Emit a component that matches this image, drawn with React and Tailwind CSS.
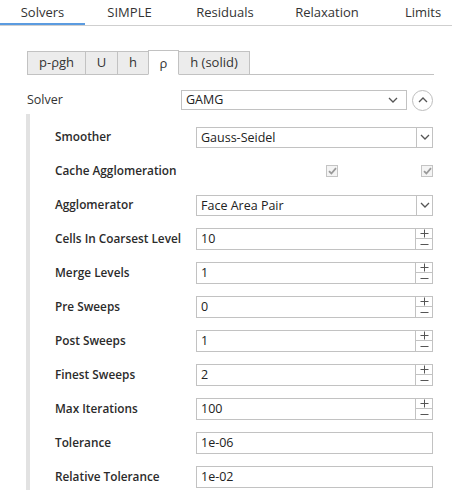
import React from "react";

const font = { fontFamily: '"Open Sans", "Noto Sans", sans-serif' };

function Chevron({ up = false, className = "" }) {
  return (
    <svg width="10" height="6" viewBox="0 0 10 6" className={className}>
      <path
        d={up ? "M1 5 L5 1 L9 5" : "M1 1 L5 5 L9 1"}
        fill="none"
        stroke="#555"
        strokeWidth="1.3"
      />
    </svg>
  );
}

function Check() {
  return (
    <div className="w-[12px] h-[12px] border border-[#c4c4c4] bg-[#f4f4f4] flex items-center justify-center">
      <svg width="9" height="8" viewBox="0 0 9 8">
        <path d="M1 4.2 L3.4 6.5 L8 1.2" fill="none" stroke="#9a9a9a" strokeWidth="1.8" />
      </svg>
    </div>
  );
}

function Select({ value }) {
  return (
    <div className="flex h-[21px] w-[237px] border border-[#c2c2c2] bg-white">
      <div className="flex-1 pl-[4px] text-[12.5px] leading-[19px] text-[#222]">{value}</div>
      <div className="w-[16px] border-l border-[#c2c2c2] flex items-center justify-center">
        <Chevron />
      </div>
    </div>
  );
}

function Spin({ value }) {
  return (
    <div className="flex h-[22px] w-[237px] border border-[#c2c2c2] bg-white">
      <div className="flex-1 pl-[4px] text-[12.5px] leading-[20px] text-[#222]">{value}</div>
      <div className="w-[17px] flex flex-col border-l border-[#c2c2c2]">
        <div className="h-[10px] border-b border-[#c2c2c2] flex items-center justify-center">
          <svg width="9" height="9" viewBox="0 0 9 9">
            <path d="M0.5 4.5 H8.5 M4.5 0.5 V8.5" stroke="#555" strokeWidth="1" />
          </svg>
        </div>
        <div className="flex-1 flex items-center justify-center">
          <svg width="9" height="9" viewBox="0 0 9 9">
            <path d="M0.5 4.5 H8.5" stroke="#555" strokeWidth="1" />
          </svg>
        </div>
      </div>
    </div>
  );
}

function Text({ value }) {
  return (
    <div className="h-[22px] w-[237px] border border-[#c2c2c2] bg-white pl-[4px] text-[12.5px] leading-[20px] text-[#222]">
      {value}
    </div>
  );
}

function Row({ label, children }) {
  return (
    <div className="flex h-[34px] items-center">
      <div className="w-[166px] shrink-0 pl-[25px] text-[11.8px] font-semibold text-[#2b2b2b] whitespace-nowrap">{label}</div>
      {children}
    </div>
  );
}

export default function App() {
  const tabs = [
    ["Solvers", "w-[85px] border-b-[3px] border-[#5b9be0]"],
    ["SIMPLE", "w-[89px]"],
    ["Residuals", "w-[102px]"],
    ["Relaxation", "w-[102px]"],
    ["Limits", "w-[90px]"],
  ];
  const sub = ["p-ρgh", "U", "h", "ρ", "h (solid)"];
  return (
    <div className="w-[452px] h-[495px] bg-white overflow-hidden text-[#333]" style={font}>
      {/* top tabs */}
      <div className="flex h-[26px] border-b border-[#cfcfcf] overflow-hidden">
        {tabs.map(([t, c]) => (
          <div key={t} className={"shrink-0 h-[26px] text-[13px] leading-[24px] text-center whitespace-nowrap " + c}>
            {t}
          </div>
        ))}
      </div>

      {/* sub tabs */}
      <div className="mt-[25px] ml-[27px] w-[407px] flex items-end border-b border-[#c2c2c2] h-[24px]">
        {sub.map((t, i) => {
          const active = i === 3;
          const w = ["w-[59px]", "w-[33px]", "w-[32px]", "w-[31px]", "w-[72px]"][i];
          return (
            <div
              key={t}
              className={
                w +
                " shrink-0 text-[13px] text-center border border-[#c2c2c2] -ml-px first:ml-0 " +
                (active
                  ? "h-[25px] bg-white border-b-white -mb-px leading-[24px] relative z-10"
                  : "h-[23px] bg-[#ececec] border-b-0 leading-[21px]")
              }
            >
              {t}
            </div>
          );
        })}
      </div>

      {/* solver row */}
      <div className="mt-[15px] flex items-center h-[20px]">
        <div className="w-[181px] shrink-0 pl-[27px] text-[12.5px]">Solver</div>
        <div className="w-[226px] shrink-0 h-[20px] border border-[#c2c2c2] flex items-center pl-[4px] pr-[8px]">
          <div className="flex-1 text-[12.5px] text-[#222] leading-[18px]">GAMG</div>
          <Chevron />
        </div>
        <div className="ml-[5px] shrink-0 w-[21px] h-[21px] rounded-full border border-[#bdbdbd] flex items-center justify-center">
          <Chevron up />
        </div>
      </div>

      {/* nested panel */}
      <div className="mt-[4px] ml-[26px] border-l-[4px] border-[#e2e2e2] h-[376px] pt-[6px]">
        <Row label="Smoother">
          <Select value="Gauss-Seidel" />
        </Row>
        <Row label="Cache Agglomeration">
          <div className="w-[237px] flex items-center">
            <div className="ml-[130px]"><Check /></div>
            <div className="ml-[83px]"><Check /></div>
          </div>
        </Row>
        <Row label="Agglomerator">
          <Select value="Face Area Pair" />
        </Row>
        <Row label="Cells In Coarsest Level">
          <Spin value="10" />
        </Row>
        <Row label="Merge Levels">
          <Spin value="1" />
        </Row>
        <Row label="Pre Sweeps">
          <Spin value="0" />
        </Row>
        <Row label="Post Sweeps">
          <Spin value="1" />
        </Row>
        <Row label="Finest Sweeps">
          <Spin value="2" />
        </Row>
        <Row label="Max Iterations">
          <Spin value="100" />
        </Row>
        <Row label="Tolerance">
          <Text value="1e-06" />
        </Row>
        <Row label="Relative Tolerance">
          <Text value="1e-02" />
        </Row>
      </div>
    </div>
  );
}
